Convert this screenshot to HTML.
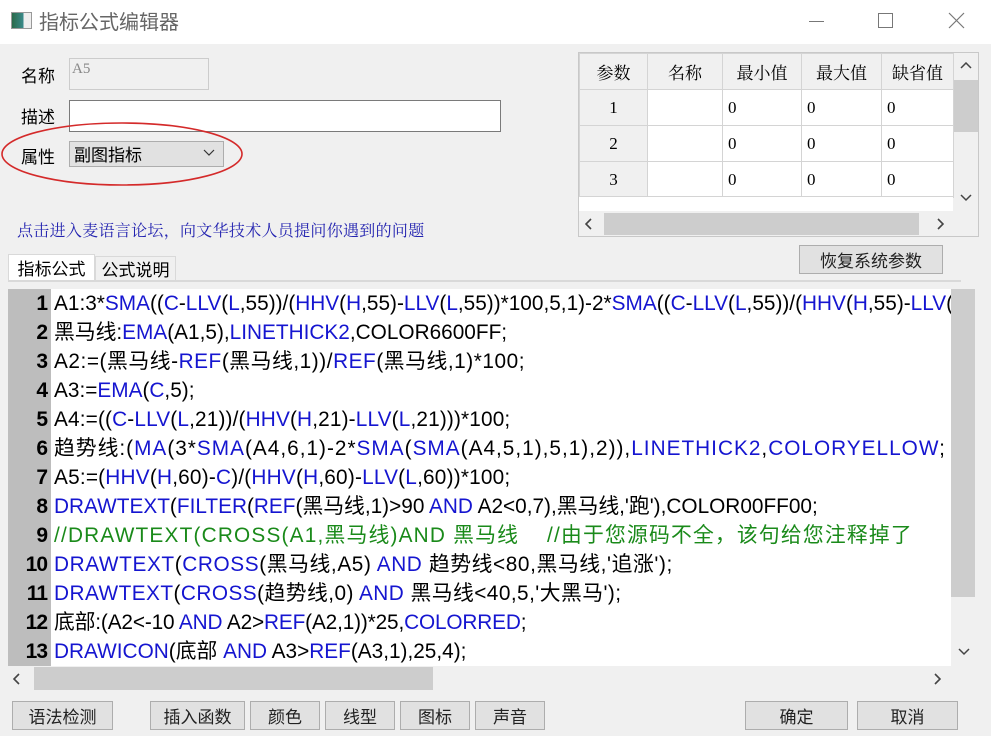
<!DOCTYPE html>
<html><head><meta charset="utf-8">
<style>
*{margin:0;padding:0;box-sizing:border-box}
body{width:991px;height:736px;background:#f0f0f0;position:relative;overflow:hidden;font-family:"Liberation Serif","Noto Serif CJK SC",serif;font-size:16px;color:#000}
.a{position:absolute}
.title{left:0;top:0;width:991px;height:44px;background:#fff}
.btn{position:absolute;background:#e1e1e1;border:1px solid #adadad;text-align:center;font-size:17px;line-height:27px;font-family:"Noto Sans CJK SC",sans-serif;color:#222}
.code{left:8px;top:289px;width:943px;height:377px;background:#fff;font-family:"Liberation Sans","Noto Sans CJK SC",sans-serif;font-size:20.8px;line-height:29px;white-space:nowrap;overflow:hidden}
.gut{position:absolute;left:0;top:0;width:43px;height:377px;background:#bdbdbd}
.ln{display:flex;height:29px}
.ln b{width:43px;text-align:right;padding-right:4px;font-weight:bold;font-size:21px;background:#bdbdbd;flex:none;position:relative;z-index:1;letter-spacing:-1px}
.ln span.t{padding-left:3px}
i{font-style:normal;color:#1515d0}
.g{color:#1a8a1a}
table{border-collapse:collapse;position:absolute;left:579px;top:53px}
td{border:1px solid #d4d4d4;height:36px;font-size:17px;background:#fff;padding-left:5px}
tr.h td{background:#f0f0f0;text-align:center;padding:0;font-size:17px}
td.n{background:#f0f0f0;text-align:center;padding:0}
</style></head><body>
<div class="a title">
 <div class="a" style="left:11px;top:12px;width:21px;height:17px;border:1px solid #999;background:linear-gradient(90deg,#2a6a4a 0,#3a8a8a 60%,#eee 60%)"></div>
 <div class="a" style="left:39px;top:8px;font-size:20px;color:#666;font-family:'Noto Sans CJK SC',sans-serif;line-height:26px">指标公式编辑器</div>
 <div class="a" style="left:809px;top:21px;width:15px;height:1px;background:#777"></div>
 <div class="a" style="left:878px;top:13px;width:15px;height:15px;border:1px solid #777"></div>
 <svg class="a" style="left:948px;top:12px" width="17" height="17"><path d="M1 1L16 16M16 1L1 16" stroke="#777" stroke-width="1.2"/></svg>
</div>
<div class="a" style="left:21px;top:62px;font-size:17px;font-family:'Noto Sans CJK SC',sans-serif">名称</div>
<div class="a" style="left:69px;top:58px;width:140px;height:32px;border:1px solid #ccc;background:#f0f0f0;font-size:15px;color:#888;padding-left:2px;line-height:20px">A5</div>
<div class="a" style="left:21px;top:103px;font-size:17px;font-family:'Noto Sans CJK SC',sans-serif">描述</div>
<div class="a" style="left:69px;top:100px;width:432px;height:32px;border:1px solid #7a7a7a;background:#fff"></div>
<div class="a" style="left:21px;top:143px;font-size:17px;font-family:'Noto Sans CJK SC',sans-serif">属性</div>
<div class="a" style="left:69px;top:141px;width:155px;height:26px;border:1px solid #adadad;background:#e1e1e1;font-size:17px;padding-left:4px;line-height:24px;font-family:'Noto Sans CJK SC',sans-serif">副图指标</div>
<svg class="a" style="left:203px;top:149px" width="12" height="8"><path d="M1 1L6 6L11 1" stroke="#333" fill="none" stroke-width="1.2"/></svg>
<svg class="a" style="left:0;top:120px" width="250" height="70"><ellipse cx="122" cy="34" rx="120" ry="31" fill="none" stroke="#d42a2a" stroke-width="1.6"/></svg>
<div class="a" style="left:17px;top:218px;font-size:16px;color:#2323b0;letter-spacing:.3px">点击进入麦语言论坛，向文华技术人员提问你遇到的问题</div>
<div class="a" style="left:8px;top:254px;width:87px;height:28px;background:#fff;border:1px solid #d9d9d9;border-bottom:none;font-size:17px;text-align:center;line-height:26px;font-family:'Noto Sans CJK SC',sans-serif">指标公式</div>
<div class="a" style="left:95px;top:256px;width:81px;height:25px;background:#f0f0f0;border:1px solid #d9d9d9;font-size:17px;text-align:center;line-height:23px;font-family:'Noto Sans CJK SC',sans-serif">公式说明</div>
<div class="a" style="left:8px;top:280px;width:953px;height:2px;background:#d9d9d9"></div>
<div class="btn" style="left:799px;top:245px;width:144px;height:29px">恢复系统参数</div>

<div class="a" style="left:578px;top:52px;width:401px;height:185px;border:1px solid #c8c8c8;background:#f0f0f0"></div>
<table>
<tr class="h"><td style="width:68px">参数</td><td style="width:75px">名称</td><td style="width:79px">最小值</td><td style="width:80px">最大值</td><td style="width:72px">缺省值</td></tr>
<tr><td class="n">1</td><td></td><td>0</td><td>0</td><td>0</td></tr>
<tr><td class="n">2</td><td></td><td>0</td><td>0</td><td>0</td></tr>
<tr><td class="n">3</td><td></td><td>0</td><td>0</td><td>0</td></tr>
</table>
<div class="a" style="left:579px;top:196px;width:374px;height:15px;background:#fff;border-top:1px solid #d4d4d4"></div>
<div class="a" style="left:954px;top:53px;width:24px;height:158px;background:#f0f0f0"></div>
<div class="a" style="left:954px;top:80px;width:24px;height:52px;background:#cdcdcd"></div>
<svg class="a" style="left:960px;top:62px" width="12" height="8"><path d="M1 6L6 1L11 6" stroke="#444" fill="none" stroke-width="1.5"/></svg>
<svg class="a" style="left:960px;top:194px" width="12" height="8"><path d="M1 1L6 6L11 1" stroke="#444" fill="none" stroke-width="1.5"/></svg>
<div class="a" style="left:579px;top:211px;width:374px;height:25px;background:#f0f0f0"></div>
<div class="a" style="left:604px;top:213px;width:315px;height:22px;background:#cdcdcd"></div>
<svg class="a" style="left:585px;top:218px" width="8" height="12"><path d="M6 1L1 6L6 11" stroke="#444" fill="none" stroke-width="1.6"/></svg>
<svg class="a" style="left:936px;top:218px" width="8" height="12"><path d="M2 1L7 6L2 11" stroke="#444" fill="none" stroke-width="1.6"/></svg>

<div class="a code">
<div class="gut"></div>
<div class="ln"><b>1</b><span class="t">A1:3*<i>SMA</i>((<i>C</i>-<i>LLV</i>(<i>L</i>,55))/(<i>HHV</i>(<i>H</i>,55)-<i>LLV</i>(<i>L</i>,55))*100,5,1)-2*<i>SMA</i>((<i>C</i>-<i>LLV</i>(<i>L</i>,55))/(<i>HHV</i>(<i>H</i>,55)-<i>LLV</i>(<i>L</i>,55))*100</span></div>
<div class="ln"><b>2</b><span class="t">黑马线:<i>EMA</i>(A1,5),<i>LINETHICK2</i>,COLOR6600FF;</span></div>
<div class="ln"><b>3</b><span class="t" style="letter-spacing:.55px">A2:=(黑马线-<i>REF</i>(黑马线,1))/<i>REF</i>(黑马线,1)*100;</span></div>
<div class="ln"><b>4</b><span class="t">A3:=<i>EMA</i>(<i>C</i>,5);</span></div>
<div class="ln"><b>5</b><span class="t" style="letter-spacing:.15px">A4:=((<i>C</i>-<i>LLV</i>(<i>L</i>,21))/(<i>HHV</i>(<i>H</i>,21)-<i>LLV</i>(<i>L</i>,21)))*100;</span></div>
<div class="ln"><b>6</b><span class="t" style="letter-spacing:1px">趋势线:(<i>MA</i>(3*<i>SMA</i>(A4,6,1)-2*<i>SMA</i>(<i>SMA</i>(A4,5,1),5,1),2)),<i>LINETHICK2</i>,<i>COLORYELLOW</i>;</span></div>
<div class="ln"><b>7</b><span class="t" style="letter-spacing:.2px">A5:=(<i>HHV</i>(<i>H</i>,60)-<i>C</i>)/(<i>HHV</i>(<i>H</i>,60)-<i>LLV</i>(<i>L</i>,60))*100;</span></div>
<div class="ln"><b>8</b><span class="t"><i>DRAWTEXT</i>(<i>FILTER</i>(<i>REF</i>(黑马线,1)&gt;90 <i>AND</i> A2&lt;0,7),黑马线,'跑'),COLOR00FF00;</span></div>
<div class="ln"><b>9</b><span class="t g" style="letter-spacing:1.2px">//DRAWTEXT(CROSS(A1,黑马线)AND 黑马线 &nbsp;&nbsp;&nbsp;//由于您源码不全，该句给您注释掉了</span></div>
<div class="ln"><b>10</b><span class="t" style="letter-spacing:.6px"><i>DRAWTEXT</i>(<i>CROSS</i>(黑马线,A5) <i>AND</i> 趋势线&lt;80,黑马线,'追涨');</span></div>
<div class="ln"><b>11</b><span class="t" style="letter-spacing:.45px"><i>DRAWTEXT</i>(<i>CROSS</i>(趋势线,0) <i>AND</i> 黑马线&lt;40,5,'大黑马');</span></div>
<div class="ln"><b>12</b><span class="t" style="letter-spacing:-.15px">底部:(A2&lt;-10 <i>AND</i> A2&gt;<i>REF</i>(A2,1))*25,<i>COLORRED</i>;</span></div>
<div class="ln"><b>13</b><span class="t"><i>DRAWICON</i>(底部 <i>AND</i> A3&gt;<i>REF</i>(A3,1),25,4);</span></div>
</div>
<div class="a" style="left:951px;top:289px;width:24px;height:308px;background:#cdcdcd"></div>
<svg class="a" style="left:958px;top:648px" width="12" height="8"><path d="M1 1L6 6L11 1" stroke="#444" fill="none" stroke-width="1.5"/></svg>
<div class="a" style="left:34px;top:667px;width:399px;height:23px;background:#cdcdcd"></div>
<svg class="a" style="left:13px;top:673px" width="8" height="12"><path d="M6 1L1 6L6 11" stroke="#444" fill="none" stroke-width="1.6"/></svg>
<svg class="a" style="left:933px;top:673px" width="8" height="12"><path d="M2 1L7 6L2 11" stroke="#444" fill="none" stroke-width="1.6"/></svg>

<div class="btn" style="left:12px;top:701px;width:101px;height:29px">语法检测</div>
<div class="btn" style="left:150px;top:701px;width:95px;height:29px">插入函数</div>
<div class="btn" style="left:250px;top:701px;width:70px;height:29px">颜色</div>
<div class="btn" style="left:325px;top:701px;width:70px;height:29px">线型</div>
<div class="btn" style="left:400px;top:701px;width:70px;height:29px">图标</div>
<div class="btn" style="left:475px;top:701px;width:70px;height:29px">声音</div>
<div class="btn" style="left:745px;top:701px;width:103px;height:29px">确定</div>
<div class="btn" style="left:857px;top:701px;width:101px;height:29px">取消</div>
</body></html>
